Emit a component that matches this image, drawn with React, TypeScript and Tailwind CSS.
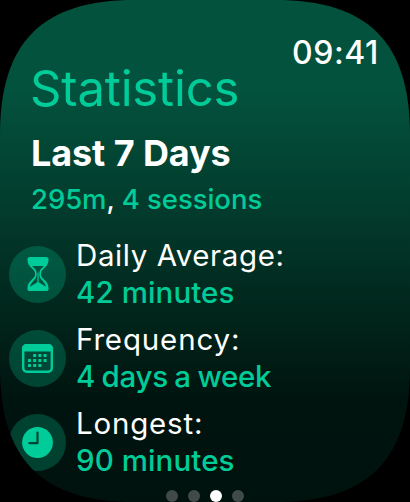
import React from 'react';

interface Stat {
  label: string;
  value: string;
  icon: React.ReactNode;
  labelClass: string;
  valueClass: string;
}

const HourglassIcon = () => (
  <svg viewBox="0 0 22 34" className="w-[22px] h-[34px]">
    <path
      fillRule="evenodd"
      fill="#00cc99"
      d="M3 0h16a2.600 2.600 0 0 1 2.600 2.600C21.600 10.500 14 12.200 14 16v2c0 3.800 7.600 5.500 7.600 13.400A2.600 2.600 0 0 1 19 34H3A2.600 2.600 0 0 1 .4 31.400C.4 23.500 8 21.800 8 18v-2C8 12.200.4 10.500.4 2.600A2.600 2.600 0 0 1 3 0z
         M5 9C7 11.200 9.600 12.500 9.600 16v2c0 4.500-5.100 5.900-6.700 11.800l7.500-4.500V15.500h1.200v9.800l7.500 4.500C17.500 23.900 12.400 22.500 12.400 18v-2c0-3.500 2.600-4.800 4.600-7z"
    />
  </svg>
);

const CalendarIcon = () => (
  <svg viewBox="0 0 31 29" className="w-[31px] h-[29px]">
    <rect x="1.200" y="1.200" width="28.600" height="26.600" rx="3.600" fill="none" stroke="#00cc99" strokeWidth="2.400" />
    <path d="M0 7.500V4.500A4.500 4.500 0 0 1 4.500 0h22A4.500 4.500 0 0 1 31 4.500v3z" fill="#00cc99" />
    <g fill="#00cc99">
      {[11.200, 16.400, 21.600].map((x) => <rect key={x} x={x} y="10" width="3" height="3" rx=".5" />)}
      {[6, 11.200, 16.400, 21.600].map((x) => <rect key={x} x={x} y="15" width="3" height="3" rx=".5" />)}
      {[6, 11.200, 16.400].map((x) => <rect key={x} x={x} y="20" width="3" height="3" rx=".5" />)}
    </g>
  </svg>
);

const ClockIcon = () => (
  <svg viewBox="0 0 31 31" className="w-[31px] h-[31px]" fill="none">
    <circle cx="15.500" cy="15.500" r="15.400" fill="#00cc99" />
    <path d="M15.500 5.700v10.500H7.400" stroke="#004433" strokeWidth="2.200" strokeLinecap="round" strokeLinejoin="round" />
  </svg>
);

const stats: Stat[] = [
  {
    label: 'Daily Average:',
    value: '42 minutes',
    icon: <HourglassIcon />,
    labelClass: 'tracking-[0.6px]',
    valueClass: 'tracking-[0.1px]',
  },
  {
    label: 'Frequency:',
    value: '4 days a week',
    icon: <CalendarIcon />,
    labelClass: 'tracking-[0.85px]',
    valueClass: 'tracking-[-0.3px] [word-spacing:-1px]',
  },
  {
    label: 'Longest:',
    value: '90 minutes',
    icon: <ClockIcon />,
    labelClass: 'tracking-[0.8px]',
    valueClass: 'tracking-[0.1px]',
  },
];

const StatRow: React.FC<{ stat: Stat }> = ({ stat }) => (
  <div className="flex items-center gap-2.5 h-[84px] pl-[9px]">
    <div className="w-[57px] h-[57px] rounded-full bg-[#00cc99]/25 flex items-center justify-center shrink-0">
      {stat.icon}
    </div>
    <div className="flex flex-col text-[29.5px] leading-[37px] whitespace-nowrap">
      <span className={`text-white ${stat.labelClass}`}>{stat.label}</span>
      <span className={`text-[#00cc99] font-medium ${stat.valueClass}`}>{stat.value}</span>
    </div>
  </div>
);

export default function App() {
  const activePage = 2;

  return (
    <div className="w-[410px] h-[502px] overflow-hidden bg-black font-['Inter',sans-serif]">
      <div className="flex flex-col w-full h-full bg-[linear-gradient(180deg,#03523d_0px,#03523d_90px,#02382a_225px,#01261c_310px,#00140f_400px,#00120d_502px)] [clip-path:path('M0_135C0_42_42_0_135_0H275C368_0_410_42_410_135V367C410_460_368_502_275_502H135C42_502_0_460_0_367Z')]">
        {/* Title bar */}
        <header className="flex flex-col h-[116px]">
          <span className="self-end mt-[34px] pr-[31px] text-[32px] leading-[38px] tracking-[0.6px] font-medium text-white">09:41</span>
          <h1 className="-mt-[12px] pl-[30px] text-[49px] leading-[58px] tracking-[-0.15px] text-[#00cc99]">Statistics</h1>
        </header>

        {/* Period summary */}
        <section className="flex flex-col h-[116px] pl-[31px] pt-[15px]">
          <h2 className="text-[36px] leading-[44px] tracking-[-0.1px] font-bold text-white whitespace-nowrap">Last 7 Days</h2>
          <p className="mt-[7px] text-[27.5px] leading-[34px] tracking-[-0.05px] font-medium text-[#00cc99] whitespace-nowrap">
            295m<span className="text-white">,</span> 4 sessions
          </p>
        </section>

        <div className="flex flex-col">
          {stats.map((stat) => (
            <StatRow key={stat.label} stat={stat} />
          ))}
        </div>

        {/* Page dots */}
        <div className="flex justify-center gap-[10px] mt-[6px] shrink-0">
          {[0, 1, 2, 3].map((page) => (
            <span key={page} className={`w-3 h-3 rounded-full ${page === activePage ? 'bg-white' : 'bg-[#404b48]'}`} />
          ))}
        </div>
      </div>
    </div>
  );
}
